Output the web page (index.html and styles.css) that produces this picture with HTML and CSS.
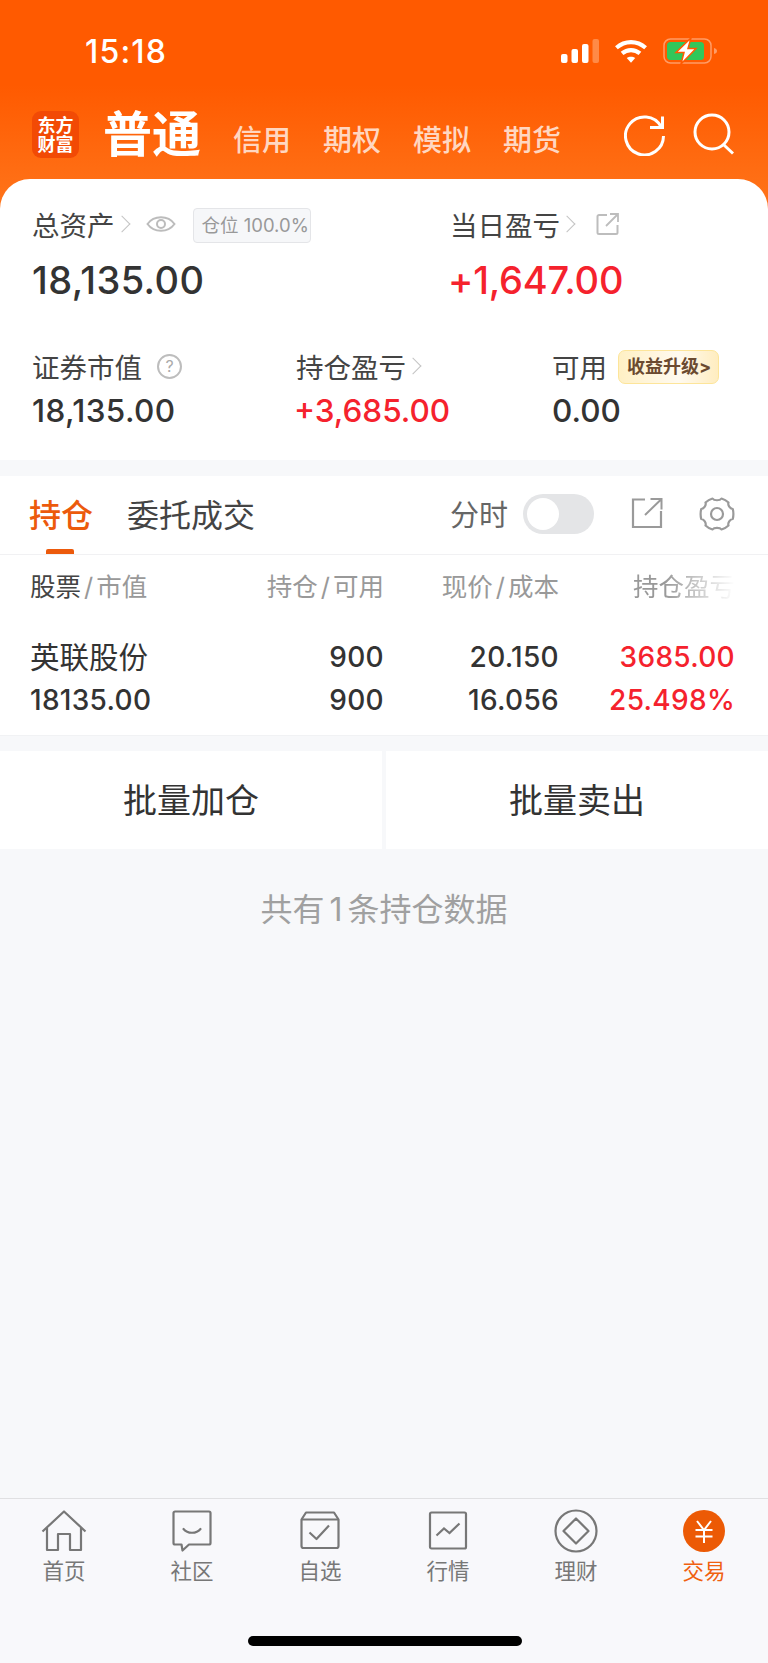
FILE: index.html
```html
<!DOCTYPE html>
<html lang="zh-CN">
<head>
    <meta charset="UTF-8">
    <meta name="viewport" content="width=device-width, initial-scale=1.0">
    <title>交易</title>
    <link rel="stylesheet" href="styles.css">
</head>
<body>
    <div class="app">
        <div class="top">
            <div class="status-bar">
                <span class="time">15:18</span>
                <div class="status-icons">
                    <svg class="signal" width="38" height="25" viewBox="0 0 38 25">
                        <rect x="0" y="15" width="6.500" height="9" rx="2" fill="#fff"/>
                        <rect x="10.500" y="10" width="6.500" height="14" rx="2" fill="#fff"/>
                        <rect x="21" y="5" width="6.500" height="19" rx="2" fill="#fff"/>
                        <rect x="31.500" y="0" width="6.500" height="24" rx="2" fill="#ff8a47"/>
                    </svg>
                    <svg class="wifi" width="32" height="25" viewBox="0 0 34 25">
                        <path d="M1.5 8.5C10.500 .5 23.500 .5 32.500 8.500" fill="none" stroke="#fff" stroke-width="4.400"/>
                        <path d="M7.500 14.500C13 9.800 21 9.800 26.500 14.500" fill="none" stroke="#fff" stroke-width="4.400"/>
                        <path d="M12.500 19.500C15 17.500 19 17.500 21.500 19.500L17 24.500Z" fill="#fff"/>
                    </svg>
                    <svg class="battery" width="56" height="27" viewBox="0 0 56 27">
                        <rect x="1" y="1" width="47" height="24" rx="6.500" fill="none" stroke="#ff9c66" stroke-width="1.500"/>
                        <rect x="4" y="4" width="37" height="18" rx="3.500" fill="#31c75a"/>
                        <path d="M51 10c2 .5 3 1.500 3 3s-1 2.500-3 3z" fill="#ff9c66"/>
                        <path d="M28 0 13 14.500h8L18 26 33 10.500h-8z" fill="#fff" stroke="#ff5a00" stroke-width="1.500"/>
                    </svg>
                </div>
            </div>
            <div class="account-bar">
                <div class="logo"><span>东方</span><span>财富</span></div>
                <span class="account-main">普通</span>
                <nav class="account-tabs">
                    <span>信用</span>
                    <span>期权</span>
                    <span>模拟</span>
                    <span>期货</span>
                </nav>
                <svg class="head-icon refresh" width="42" height="42" viewBox="0 0 42 42" fill="none" stroke="#fff" stroke-width="3">
                    <path d="M37 12.500A19 19 0 1 0 39.500 22"/>
                    <path d="M26 13.500H38.500V2.500"/>
                </svg>
                <svg class="head-icon search" width="42" height="42" viewBox="0 0 42 42" fill="none" stroke="#fff" stroke-width="3">
                    <circle cx="19" cy="19" r="17"/>
                    <path d="M31 32 40 40.500"/>
                </svg>
            </div>

            <section class="summary">
                <div class="summary-row first">
                    <div class="cell total">
                        <div class="label">
                            总资产<i class="chevron"></i>
                            <svg class="eye" width="30" height="20" viewBox="0 0 30 20" fill="none" stroke="#bcbcbc" stroke-width="2">
                                <path d="M1.500 10C8 1 22 1 28.500 10 22 19 8 19 1.500 10Z"/>
                                <circle cx="15" cy="10" r="4"/>
                            </svg>
                            <span class="position-tag">仓位 100.0%</span>
                        </div>
                        <div class="value big spaced">18,135.00</div>
                    </div>
                    <div class="cell today">
                        <div class="label">
                            当日盈亏<i class="chevron"></i>
                            <svg class="share-small" width="24" height="24" viewBox="0 0 24 24" fill="none" stroke="#bdbdbd" stroke-width="2">
                                <path d="M11 3H3a1.500 1.500 0 0 0-1.500 1.500v16A1.500 1.500 0 0 0 3 22h17a1.500 1.500 0 0 0 1.500-1.500V13"/>
                                <path d="M10 14 21 3M14 2h8v8" stroke-width="1.800"/>
                            </svg>
                        </div>
                        <div class="value big up signed">+1,647.00</div>
                    </div>
                </div>
                <div class="summary-row second">
                    <div class="cell market">
                        <div class="label">
                            证券市值
                            <span class="help">?</span>
                        </div>
                        <div class="value spaced">18,135.00</div>
                    </div>
                    <div class="cell profit">
                        <div class="label">持仓盈亏<i class="chevron"></i></div>
                        <div class="value up signed">+3,685.00</div>
                    </div>
                    <div class="cell avail">
                        <div class="label">
                            可用
                            <span class="upgrade">收益升级&gt;</span>
                        </div>
                        <div class="value">0.00</div>
                    </div>
                </div>
            </section>
        </div>

        <section class="holdings">
            <div class="tabs">
                <span class="tab active">持仓</span>
                <span class="tab">委托成交</span>
                <div class="tab-tools">
                    <span class="tool-label">分时</span>
                    <span class="switch"><i></i></span>
                    <svg class="share" width="32" height="32" viewBox="0 0 32 32" fill="none" stroke="#9a9a9a" stroke-width="2.200">
                        <path d="M14 2.500H2V30H30V14"/>
                        <path d="M14 18 30 2.500M19.500 2H30.500V12.500" stroke-width="2"/>
                    </svg>
                    <svg class="gear" width="36" height="36" viewBox="0 0 36 36" fill="none" stroke="#9a9a9a" stroke-width="2.200">
                        <path d="M13.500 2.500C15 4.800 21 4.800 22.500 2.500 25 3.200 27.500 4.600 29.500 6.500 28.500 9 31 12.800 33.800 13 34.400 15.500 34.400 20.500 33.800 23 31 23.200 28.500 27 29.500 29.500 27.500 31.400 25 32.800 22.500 33.500 21 31.200 15 31.200 13.500 33.500 11 32.800 8.500 31.400 6.500 29.500 7.500 27 5 23.200 2.200 23 1.600 20.500 1.600 15.500 2.200 13 5 12.800 7.500 9 6.500 6.500 8.500 4.600 11 3.200 13.500 2.500Z" stroke-linejoin="round"/>
                        <circle cx="18" cy="18" r="6"/>
                    </svg>
                </div>
            </div>
            <div class="table-head">
                <span class="col-name"><b>股票</b><i class="slash">/</i>市值</span>
                <span class="col-num">持仓<i class="slash">/</i>可用</span>
                <span class="col-num">现价<i class="slash">/</i>成本</span>
                <span class="col-num fade">持仓盈亏</span>
            </div>
            <div class="table-row">
                <div class="col-name">
                    <div class="stock">英联股份</div>
                    <div>18135.00</div>
                </div>
                <div class="col-num">
                    <div>900</div>
                    <div>900</div>
                </div>
                <div class="col-num">
                    <div>20.150</div>
                    <div>16.056</div>
                </div>
                <div class="col-num up">
                    <div>3685.00</div>
                    <div>25.498%</div>
                </div>
            </div>
        </section>

        <div class="batch">
            <button>批量加仓</button>
            <button>批量卖出</button>
        </div>

        <p class="count">共有<span class="count-num">1</span>条持仓数据</p>

        <nav class="tabbar">
            <div class="tabbar-item">
                <svg width="46" height="42" viewBox="0 0 46 42" fill="none" stroke="#777" stroke-width="2.200" stroke-linejoin="round">
                    <path d="M1.500 21.500 23 1.500l21.500 20"/>
                    <path d="M6 18V40H17V24H29V40H40V18"/>
                </svg>
                <span>首页</span>
            </div>
            <div class="tabbar-item">
                <svg width="40" height="42" viewBox="0 0 40 42" fill="none" stroke="#777" stroke-width="2.200" stroke-linejoin="round">
                    <path d="M3 1.500H37a1.500 1.500 0 0 1 1.500 1.500V33a1.500 1.500 0 0 1-1.500 1.500H17L10.500 40.500 9.500 34.500H3A1.500 1.500 0 0 1 1.500 33V3A1.500 1.500 0 0 1 3 1.500Z"/>
                    <path d="M11.500 19c4 5 13 5 17 0" stroke-linecap="round"/>
                </svg>
                <span>社区</span>
            </div>
            <div class="tabbar-item">
                <svg width="40" height="42" viewBox="0 0 40 42" fill="none" stroke="#777" stroke-width="2.200" stroke-linejoin="round">
                    <path d="M1.500 9.500 6 2.500H34l4.500 7V36a2 2 0 0 1-2 2H3.500a2 2 0 0 1-2-2Z"/>
                    <path d="M1.500 9.500H38.500"/>
                    <path d="M9.500 22.500 16.500 29 29 15.500"/>
                </svg>
                <span>自选</span>
            </div>
            <div class="tabbar-item">
                <svg width="40" height="42" viewBox="0 0 40 42" fill="none" stroke="#777" stroke-width="2.200">
                    <rect x="2" y="2.500" width="36" height="36" rx="1.500"/>
                    <path d="M8.500 25.500 16 18.500 21.500 23 31.500 13.500"/>
                </svg>
                <span>行情</span>
            </div>
            <div class="tabbar-item">
                <svg width="44" height="44" viewBox="0 0 44 44" fill="none" stroke="#777" stroke-width="2.200">
                    <circle cx="22" cy="22" r="20.500"/>
                    <path d="M22 9.500 34.500 22 22 34.500 9.500 22Z" stroke-linejoin="round"/>
                </svg>
                <span>理财</span>
            </div>
            <div class="tabbar-item active">
                <svg width="42" height="44" viewBox="0 0 42 42">
                    <circle cx="21" cy="21" r="21" fill="#ec5a05"/>
                    <path d="M14 11 21 20 28 11M12.500 20H29.500M12.500 26.500H29.500M21 20V33" fill="none" stroke="#fff" stroke-width="2"/>
                </svg>
                <span>交易</span>
            </div>
            <i class="home-bar"></i>
        </nav>
    </div>
</body>
</html>
```

FILE: styles.css
```css
* {
    box-sizing: border-box;
}
body {
    margin: 0;
    background-color: #f7f8fa;
    font-family: Inter, "Noto Sans CJK SC", sans-serif;
    color: #333;
}
.app {
    position: relative;
    height: 1663px;
    overflow: hidden;
}
.top {
    background: linear-gradient(#ff5a00 85px, #ff761c 215px);
}
.status-bar {
    display: flex;
    justify-content: space-between;
    align-items: center;
    height: 100px;
    padding: 2px 49px 0 85px;
    color: #fff;
}
.time {
    font-size: 32px;
    font-weight: 500;
    letter-spacing: 1.200px;
}
.status-icons {
    display: flex;
    align-items: center;
    gap: 14px;
}
.wifi {
    margin: 0 2px 0 2px;
}
.account-bar {
    display: flex;
    align-items: center;
    height: 79px;
    padding: 0 0 10px 32px;
    color: #fff;
}
.logo {
    display: flex;
    flex-direction: column;
    align-items: center;
    justify-content: center;
    width: 47px;
    height: 47px;
    border-radius: 9px;
    background: #f24a05;
    font-size: 18px;
    font-weight: 700;
    line-height: 19px;
}
.account-main {
    margin-left: 24px;
    font-size: 49px;
    font-weight: 700;
    line-height: 50px;
}
.account-tabs {
    display: flex;
    gap: 32px;
    margin: 12px 0 0 32px;
    font-size: 29px;
    line-height: 40px;
    font-weight: 500;
    color: #ffd7c1;
}
.head-icon {
    flex: none;
}
.refresh {
    margin: 0 0 0 63px;
}
.search {
    margin: -2px 0 0 27px;
}
.summary {
    height: 281px;
    padding: 0 32px;
    background: #fff;
    border-radius: 30px 30px 0 0;
}
.summary-row {
    display: flex;
}
.first {
    height: 167px;
    padding-top: 25px;
}
.total {
    width: 418px;
}
.market {
    width: 264px;
}
.profit {
    width: 256px;
}
.label {
    display: flex;
    align-items: center;
    height: 40px;
    font-size: 27.500px;
    color: #444;
}
.value {
    margin-top: 5px;
    font-size: 31.500px;
    line-height: 40px;
    font-weight: 500;
}
.value.big {
    margin-top: 12px;
    font-size: 38px;
    line-height: 48px;
}
.spaced {
    letter-spacing: .4px;
}
.signed {
    margin-left: -2px;
}
.today .signed {
    letter-spacing: -.2px;
}
.up {
    color: #f5222d;
}
.chevron {
    width: 12px;
    height: 12px;
    margin-left: 1px;
    border-top: 1.500px solid #c4c4c4;
    border-right: 1.500px solid #c4c4c4;
    transform: rotate(45deg);
}
.eye {
    margin-left: 18px;
}
.position-tag {
    margin: 3px 0 0 17px;
    padding: 0 1px 0 8px;
    height: 35px;
    border: 1px solid #e4e5e8;
    border-radius: 4px;
    background: #f6f7f9;
    font-size: 18.500px;
    line-height: 33px;
    color: #999;
}
.share-small {
    margin-left: 23px;
}
.help {
    width: 25px;
    height: 25px;
    margin-left: 15px;
    border: 2px solid #bdbdbd;
    border-radius: 50%;
    font-size: 16px;
    line-height: 21px;
    text-align: center;
    color: #aaa;
}
.upgrade {
    margin: 1px 0 0 11px;
    height: 34px;
    padding: 0 7px 0 8px;
    border: 1px solid #fde59a;
    border-radius: 7px;
    background: linear-gradient(90deg, #fff0c4, #fffaf0 60%, #ffedc0);
    font-size: 18px;
    font-weight: 700;
    line-height: 32px;
    color: #6b4a30;
}
.holdings {
    margin-top: 16px;
    background: #fff;
    border-bottom: 1px solid #f1f2f4;
}
.tabs {
    position: relative;
    display: flex;
    align-items: center;
    height: 79px;
    padding: 0 33px 5px 29px;
    border-bottom: 1px solid #f1f1f3;
    font-size: 32px;
}
.tab {
    margin-right: 34px;
    color: #444;
}
.tab.active {
    font-weight: 500;
    color: #ec5a0c;
}
.tab.active::after {
    content: "";
    position: absolute;
    left: 46px;
    bottom: 0;
    width: 28px;
    height: 5px;
    border-radius: 2px 2px 0 0;
    background: #ec5a0c;
}
.tab-tools {
    display: flex;
    align-items: center;
    margin-left: auto;
}
.tool-label {
    font-size: 29px;
    color: #666;
}
.switch {
    width: 71px;
    height: 40px;
    margin: 2px 0 0 15px;
    padding: 4px;
    border-radius: 20px;
    background: #e4e5e7;
}
.switch i {
    display: block;
    width: 32px;
    height: 32px;
    border-radius: 50%;
    background: #fff;
}
.share {
    margin: 1px 0 0 37px;
}
.gear {
    margin: 2px 0 0 36px;
}
.table-head,
.table-row {
    display: grid;
    grid-template-columns: 182px 172px 175px 176px;
    padding: 0 33px 0 30px;
}
.table-head {
    align-items: center;
    height: 58px;
    font-size: 25.500px;
    color: #999;
    white-space: nowrap;
}
.table-head b {
    font-weight: 400;
    color: #444;
}
.slash {
    margin: 0 3px;
    font-style: normal;
}
.col-num {
    text-align: right;
}
.fade {
    -webkit-mask-image: linear-gradient(90deg, #000 60%, transparent);
    mask-image: linear-gradient(90deg, #000 60%, transparent);
}
.table-row {
    height: 122px;
    padding-top: 23px;
    font-size: 28px;
    font-weight: 500;
    line-height: 43px;
    letter-spacing: .3px;
    white-space: nowrap;
}
.stock {
    font-size: 29.500px;
    font-weight: 400;
    letter-spacing: 0;
}
.batch {
    display: flex;
    justify-content: space-between;
    margin-top: 15px;
}
.batch button {
    width: 382px;
    height: 98px;
    padding: 0 0 3px;
    border: none;
    background: #fff;
    font-family: inherit;
    font-size: 34px;
    color: #333;
}
.count {
    margin: 38px 0 0;
    font-size: 32px;
    line-height: 46px;
    text-align: center;
    color: #a0a0a0;
}
.count-num {
    margin: 0 5px;
}
.tabbar {
    position: absolute;
    left: 0;
    bottom: 0;
    display: grid;
    grid-template-columns: repeat(6, 1fr);
    width: 100%;
    height: 165px;
    padding-top: 10px;
    border-top: 1px solid #e0e0e2;
    background: #f8f8fb;
}
.tabbar-item {
    display: flex;
    flex-direction: column;
    align-items: center;
    font-size: 21.500px;
    line-height: 30px;
    color: #777;
}
.tabbar-item svg {
    height: 44px;
    margin-bottom: 3px;
}
.tabbar-item.active {
    color: #f0600f;
}
.home-bar {
    position: absolute;
    left: 248px;
    bottom: 17px;
    width: 274px;
    height: 10px;
    border-radius: 5px;
    background: #000;
}
```
